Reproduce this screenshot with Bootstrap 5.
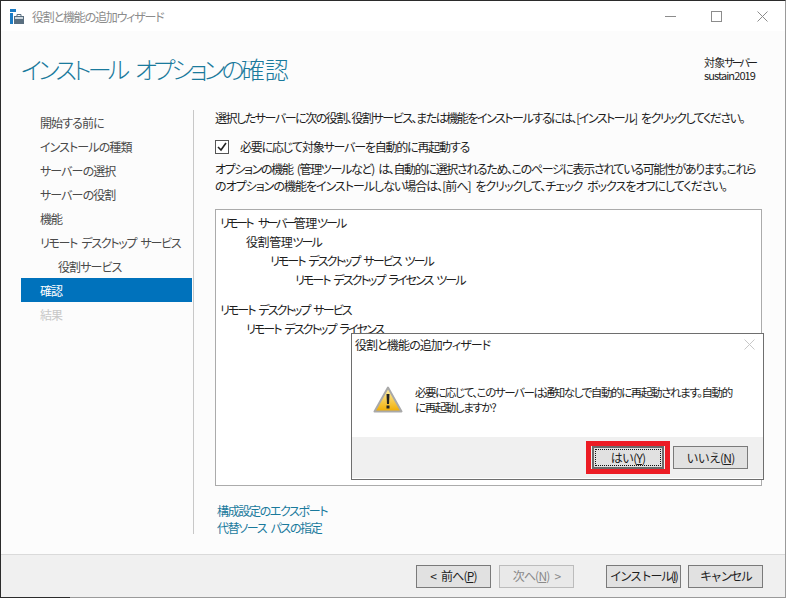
<!DOCTYPE html>
<html lang="ja">
<head>
<meta charset="UTF-8">
<title>役割と機能の追加ウィザード</title>
<link href="https://cdn.jsdelivr.net/npm/bootstrap@5.3.0/dist/css/bootstrap.min.css" rel="stylesheet">
<style>
    html, body { height: 598px; overflow: hidden; }
    body {
        background: #fcfcfc;
        font-family: "Noto Sans CJK JP", "Liberation Sans", sans-serif;
        font-feature-settings: "palt";
        font-size: 12px;
        line-height: 17px;
        letter-spacing: -0.9px;
        word-spacing: 3px;
        color: #1e1e1e;
    }
    .wizard { position: relative; width: 786px; height: 598px; border-top: 1px solid #2b2b2b; border-left: 1px solid #2b2b2b; border-right: 1px solid #9a9a9a; border-bottom: 1px solid #9a9a9a; }
    .wizard::after { content: ""; position: absolute; left: -1px; bottom: -1px; width: 70px; height: 1px; background: #2b2b2b; }
    .titlebar { height: 30px; background: #fff; padding-left: 9px; color: #8c8c8c; letter-spacing: -1.2px; }
    .title-icon { margin-right: 7px; }
    .win-btn { width: 46px; height: 30px; }
    .head-row { height: 79px; padding: 0 30px 4px 20px; }
    .page-title { font-size: 24px; line-height: 34px; color: #1a7a9c; font-weight: 300; margin: 0; letter-spacing: -3.8px; word-spacing: 7px; white-space: nowrap; }
    .kanji-wide { letter-spacing: 0; }
    .target { font-size: 11px; line-height: 13px; letter-spacing: -0.9px; }
    .kana-tight { display: inline-block; letter-spacing: -2.9px; }
    .main-row { height: 424px; margin-bottom: 20px; }
    .side { width: 193px; border-right: 1px solid #c8c8c8; padding-left: 20px; }
    .side-item { height: 24px; line-height: 26px; padding-left: 19px; width: 171px; color: #4a4a4a; white-space: nowrap; }
    .side-item.long { letter-spacing: -1.3px; }
    .side-item.sub { padding-left: 37px; }
    .side-item.on { background: #0072bc; color: #fff; }
    .side-item.off { color: #c8c8c8; }
    .content { padding-left: 21px; width: 570px; white-space: nowrap; }
    .intro-text { margin: -1px 0 0; letter-spacing: -1.46px; }
    .check-row { margin: 13px 0 5px; height: 16px; }
    .check-box { width: 14px; height: 14px; border: 1px solid #555; background: #fff; margin-right: 11px; }
    .check-label { letter-spacing: -1.2px; margin-top: -2px; }
    .opt-text { margin-bottom: 15px; margin-top: 0; }
    .opt-a { letter-spacing: -1.35px; }
    .opt-b { letter-spacing: -1px; }
    .sum-box { width: 547px; height: 277px; border: 1px solid #ababab; background: #fff; padding: 3px 4px; letter-spacing: -1.9px; }
    .sum-kanji { letter-spacing: -0.4px; }
    .sum-kana { letter-spacing: -2.6px; word-spacing: 6px; }
    .lvl1 { padding-left: 26px; }
    .lvl2 { padding-left: 50px; }
    .lvl3 { padding-left: 75px; }
    .sum-line { height: 19px; line-height: 19px; }
    .sum-gap { height: 11px; }
    .links { color: #1a7a9c; line-height: 17px; margin: 16px 0 0 2px; letter-spacing: -1.35px; }
    .foot { height: 43px; background: #f0f0f0; border-top: 1px solid #dadada; padding-right: 22px; }
    .foot-gap { width: 32px; }
    .gap-s { margin-left: 8px; }
    .gap-xs { margin-left: 7px; }
    .win-cmd { width: 75px; height: 23px; background: #e1e1e1; border: 1px solid #7a7a7a; border-radius: 0; padding: 0; font-size: 12px; line-height: 20px; letter-spacing: -0.8px; word-spacing: 3px; color: #1e1e1e; white-space: nowrap; }
    .win-cmd.tight { letter-spacing: -1.8px; }
    .win-cmd[disabled] { background: #e9e9e9; border-color: #bcbcbc; color: #8a8a8a; opacity: 1; }
    .dlg { position: absolute; left: 351px; top: 333px; width: 413px; height: 147px; background: #fff; border: 1px solid #6e6e6e; white-space: nowrap; }
    .dlg-title { height: 21px; padding-left: 3px; margin-top: 0; }
    .dlg-body { height: 82px; padding: 30px 0 0 21px; }
    .warn-icon { margin-top: 1px; }
    .dlg-text { font-size: 11.5px; line-height: 15px; margin-left: 12px; letter-spacing: -1.4px; }
    .dlg-foot { height: 41px; background: #f0f0f0; padding-right: 15px; }
    .hl { border: 5px solid #ec1c24; margin-right: 3px; padding: 0 1px; }
    .hl .win-cmd { display: block; width: 72px; height: 23px; border: 2px solid #6a6a6a; position: relative; }
    .dots { position: absolute; inset: 1px; border: 1px dotted #111; }
    u { text-underline-offset: 1px; }
</style>
</head>
<body>
<div class="wizard">
    <div class="titlebar d-flex align-items-center">
        <svg width="15" height="15" viewBox="0 0 15 15" class="title-icon">
            <rect x="0" y="0" width="6" height="3" fill="#1c7cc4"/>
            <rect x="0" y="4" width="3" height="11" fill="#1c7cc4"/>
            <rect x="4" y="7" width="10" height="8" fill="#5a6f80"/>
            <rect x="5" y="8" width="8" height="2" fill="#cfd8df"/>
            <path d="M7 7V5.500h4V7" fill="none" stroke="#5a6f80"/>
        </svg>
        <span>役割と機能の追加ウィザード</span>
        <div class="ms-auto d-flex">
            <div class="win-btn d-flex align-items-center justify-content-center">
                <svg width="11" height="11"><path d="M0 5.500h11" stroke="#8c8c8c"/></svg>
            </div>
            <div class="win-btn d-flex align-items-center justify-content-center">
                <svg width="11" height="11"><rect x=".5" y=".5" width="10" height="10" fill="none" stroke="#8c8c8c"/></svg>
            </div>
            <div class="win-btn d-flex align-items-center justify-content-center">
                <svg width="11" height="11"><path d="M.5 .5l10 10M10.500 .5l-10 10" stroke="#8c8c8c"/></svg>
            </div>
        </div>
    </div>
    <div class="head-row d-flex justify-content-between align-items-center">
        <h1 class="page-title">インストール オプションの<span class="kanji-wide">確認</span></h1>
        <div class="target text-end">対象<span class="kana-tight">サーバー</span><br>sustain2019</div>
    </div>
    <div class="main-row d-flex">
        <div class="side">
            <div class="side-item">開始する前に</div>
            <div class="side-item">インストールの種類</div>
            <div class="side-item">サーバーの選択</div>
            <div class="side-item">サーバーの役割</div>
            <div class="side-item">機能</div>
            <div class="side-item long">リモート デスクトップ サービス</div>
            <div class="side-item sub">役割サービス</div>
            <div class="side-item on">確認</div>
            <div class="side-item off">結果</div>
        </div>
        <div class="content">
            <p class="intro-text">選択したサーバーに次の役割、役割サービス、または機能をインストールするには、[インストール] をクリックしてください。</p>
            <div class="check-row d-flex align-items-center">
                <div class="check-box d-flex align-items-center justify-content-center">
                    <svg width="10" height="10" viewBox="0 0 10 10"><path d="M1 5l3 3 5-7" fill="none" stroke="#222" stroke-width="1.600"/></svg>
                </div>
                <span class="check-label">必要に応じて対象サーバーを自動的に再起動する</span>
            </div>
            <p class="opt-text"><span class="opt-a">オプションの機能 (管理ツールなど) は、自動的に選択されるため、このページに表示されている可能性があります。これら</span><br><span class="opt-b">のオプションの機能をインストールしない場合は、[前へ] をクリックして、チェック ボックスをオフにしてください。</span></p>
            <div class="sum-box">
                <div class="sum-line"><span class="sum-kana">リモート サーバー</span><span class="sum-kanji">管理</span>ツール</div>
                <div class="sum-line lvl1"><span class="sum-kanji">役割管理</span>ツール</div>
                <div class="sum-line lvl2">リモート デスクトップ サービス ツール</div>
                <div class="sum-line lvl3">リモート デスクトップ ライセンス ツール</div>
                <div class="sum-gap"></div>
                <div class="sum-line">リモート デスクトップ サービス</div>
                <div class="sum-line lvl1">リモート デスクトップ ライセンス</div>
            </div>
            <div class="links">構成設定のエクスポート<br>代替ソース パスの指定</div>
        </div>
    </div>
    <div class="foot d-flex align-items-center justify-content-end">
        <button class="btn win-cmd">&lt; 前へ(<u>P</u>)</button>
        <button class="btn win-cmd gap-s" disabled>次へ(<u>N</u>) &gt;</button>
        <div class="foot-gap"></div>
        <button class="btn win-cmd tight">インストール(<u>I</u>)</button>
        <button class="btn win-cmd tight gap-xs">キャンセル</button>
    </div>
</div>

<div class="dlg">
    <div class="dlg-title d-flex align-items-center justify-content-between">
        <span>役割と機能の追加ウィザード</span>
        <svg width="11" height="11" class="me-2"><path d="M.5 .5l10 10M10.500 .5l-10 10" stroke="#c8c8c8"/></svg>
    </div>
    <div class="dlg-body d-flex align-items-start">
        <svg width="30" height="27" viewBox="0 0 30 27" class="flex-shrink-0 warn-icon">
            <defs><linearGradient id="warn" x1="0" y1="0" x2="0" y2="1"><stop offset="0" stop-color="#fff3b0"/><stop offset="1" stop-color="#f0ac00"/></linearGradient></defs>
            <path d="M15 1.500L28.500 25.500H1.500Z" fill="url(#warn)" stroke="#a9a9a9" stroke-width="2" stroke-linejoin="round"/>
            <path d="M13.500 8h3l-.5 10h-2Z" fill="#222"/>
            <rect x="13.500" y="19.500" width="3" height="3" fill="#222"/>
        </svg>
        <div class="dlg-text">必要に応じて、このサーバーは通知なしで自動的に再起動されます。自動的<br>に再起動しますか?</div>
    </div>
    <div class="dlg-foot d-flex align-items-center justify-content-end">
        <div class="hl">
            <button class="btn win-cmd"><span class="dots"></span>はい(<u>Y</u>)</button>
        </div>
        <button class="btn win-cmd">いいえ(<u>N</u>)</button>
    </div>
</div>
<script src="https://cdn.jsdelivr.net/npm/bootstrap@5.3.0/dist/js/bootstrap.bundle.min.js"></script>
</body>
</html>
